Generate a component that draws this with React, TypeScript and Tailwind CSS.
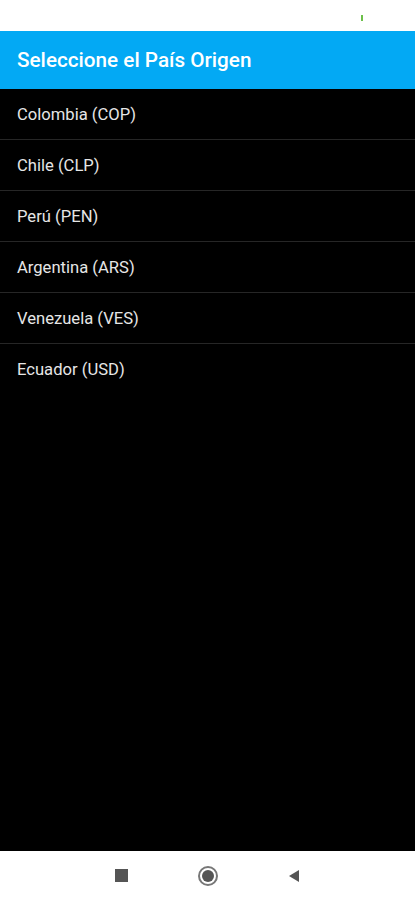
const countries = [
  "Colombia (COP)",
  "Chile (CLP)",
  "Perú (PEN)",
  "Argentina (ARS)",
  "Venezuela (VES)",
  "Ecuador (USD)",
]

export default function App() {
  return (
    <div className="flex h-[900px] w-[415px] flex-col bg-black font-['Roboto',sans-serif]">
      <div className="relative h-[31px] shrink-0 bg-white">
        <div className="absolute left-[361px] top-[15px] h-[6px] w-[2px] bg-[#6cc04a]" />
      </div>
      <div className="flex h-[58px] shrink-0 items-center bg-[#03a9f4] px-[17px] pt-[2px]">
        <h1 className="text-[20.7px] font-medium text-white">Seleccione el País Origen</h1>
      </div>
      <ul className="flex-1">
        {countries.map((c, i) => (
          <li
            key={c}
            className={`flex h-[51px] items-center px-[17px] pt-[2px] text-[16.6px] text-[#e6e6e6] ${
              i < countries.length - 1 ? "border-b border-[#262626]" : ""
            }`}
          >
            {c}
          </li>
        ))}
      </ul>
      <div className="flex h-[49px] shrink-0 items-center justify-center gap-[70px] bg-white">
        <div className="h-[13px] w-[13px] bg-[#555]" />
        <div className="flex h-[20px] w-[20px] items-center justify-center rounded-full border-[2px] border-[#777]">
          <div className="h-[12px] w-[12px] rounded-full bg-[#555]" />
        </div>
        <svg width="12" height="14" viewBox="0 0 12 14">
          <path d="M11 1 L1 7 L11 13 Z" fill="#555" />
        </svg>
      </div>
    </div>
  )
}
